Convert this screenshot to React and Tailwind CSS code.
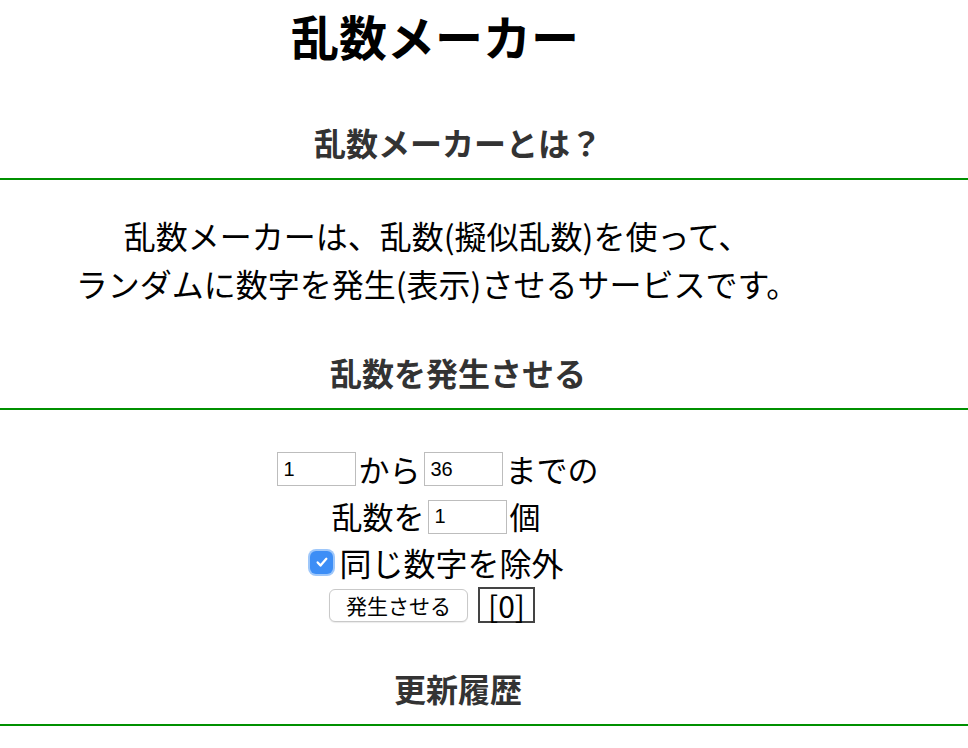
import React, { useState } from 'react';

const Heading = ({ children, className = '' }) => (
  <h2
    className={`pr-[52px] pb-[12px] border-b-2 border-[#009000] text-center text-[32px] leading-[48px] font-bold text-[#333] ${className}`}
  >
    {children}
  </h2>
);

const NumInput = ({ value, onChange }) => (
  <input
    type="text"
    value={value}
    onChange={(e) => onChange(e.target.value)}
    className="w-[79px] h-[34px] mx-[3px] border border-[#bdbdbd] bg-white pl-[6px] text-[20px] text-black font-['Liberation_Sans',sans-serif] outline-none align-middle"
  />
);

export default function App() {
  const [from, setFrom] = useState('1');
  const [to, setTo] = useState('36');
  const [count, setCount] = useState('1');
  const [unique, setUnique] = useState(true);

  return (
    <div className="w-[968px] bg-white text-black font-['Noto_Sans_CJK_JP','Noto_Sans',sans-serif]">
      {/* title */}
      <h1 className="w-[870px] text-center text-[48px] leading-[70px] font-bold">乱数メーカー</h1>

      <Heading className="mt-[48px]">乱数メーカーとは？</Heading>

      <p className="w-[874px] mt-[31px] text-center text-[32px] leading-[48px]">
        乱数メーカーは、乱数(擬似乱数)を使って、
        <br />
        ランダムに数字を発生(表示)させるサービスです。
      </p>

      <Heading className="mt-[41px]">乱数を発生させる</Heading>

      {/* form */}
      <div className="w-[872px] mt-[35px] text-[31px]">
        <div className="h-[48px] flex items-center justify-center">
          <NumInput value={from} onChange={setFrom} />
          <span>から</span>
          <NumInput value={to} onChange={setTo} />
          <span>までの</span>
        </div>
        <div className="h-[47px] flex items-center justify-center">
          <span>乱数を</span>
          <NumInput value={count} onChange={setCount} />
          <span>個</span>
        </div>
        <div className="h-[44px] flex items-center justify-center">
          <label className="flex items-center cursor-pointer">
            <span
              onClick={() => setUnique(!unique)}
              className={`w-[23px] h-[23px] ml-[2px] mr-[6px] rounded-[6px] flex items-center justify-center ring-2 ${
                unique ? 'bg-[#3d8ef6] ring-[#9ec7fa]' : 'bg-white ring-[#bbb]'
              }`}
            >
              {unique && (
                <svg width="16" height="16" viewBox="0 0 14 14" fill="none">
                  <path d="M3.2 7.4l2.5 2.7L10.8 4.2" stroke="white" strokeWidth="2" strokeLinecap="round" strokeLinejoin="round" />
                </svg>
              )}
            </span>
            <span className="text-[32px]">同じ数字を除外</span>
          </label>
        </div>
        <div className="h-[42px] pr-[8px] flex items-center justify-center gap-[10px]">
          <button className="w-[139px] h-[33px] rounded-[6px] border border-[#c9c9c9] bg-white text-[21px] leading-none shadow-[0_1px_1px_rgba(0,0,0,0.08)]">
            発生させる
          </button>
          <div className="w-[57px] h-[36px] border-2 border-[#444] flex items-center justify-center text-[30px] leading-[30px]">
            [0]
          </div>
        </div>
      </div>

      <Heading className="mt-[38px]">更新履歴</Heading>
    </div>
  );
}
